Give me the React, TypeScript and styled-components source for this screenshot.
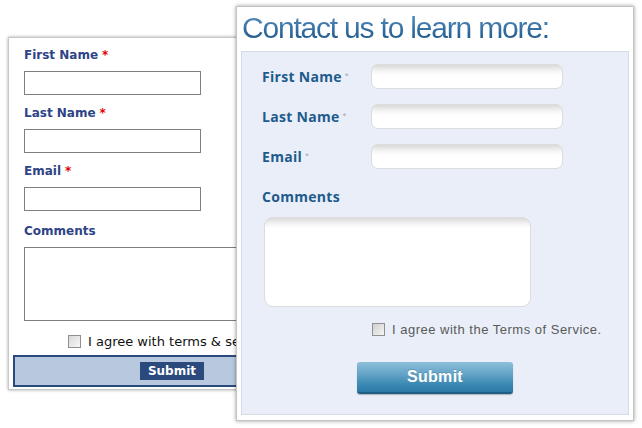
import React from 'react';
import styled, { createGlobalStyle } from 'styled-components';

const GlobalStyle = createGlobalStyle`
  html, body {
    margin: 0;
    padding: 0;
    background: #ffffff;
  }
  body {
    font-family: 'DejaVu Sans', Verdana, sans-serif;
  }
`;

function OldForm() {
  const fields = [
    { label: 'First Name', required: true },
    { label: 'Last Name', required: true },
    { label: 'Email', required: true },
  ];

  return (
    <OldCard>
      {fields.map((f) => (
        <OldField key={f.label}>
          <OldLabel>
            {f.label}
            {f.required && <OldStar>*</OldStar>}
          </OldLabel>
          <OldInput type="text" />
        </OldField>
      ))}
      <OldField $spaced>
        <OldLabel>Comments</OldLabel>
        <OldTextArea />
      </OldField>
      <OldAgree>
        <OldCheck type="checkbox" />
        <span>I agree with terms &amp; services</span>
      </OldAgree>
      <OldSubmitBar>
        <OldSubmit type="button">Submit</OldSubmit>
      </OldSubmitBar>
    </OldCard>
  );
}

function NewForm() {
  const fields = ['First Name', 'Last Name', 'Email'];

  return (
    <NewCard>
      <Title>Contact us to learn more:</Title>
      <Panel>
        {fields.map((label) => (
          <Row key={label}>
            <NewLabel>
              {label}
              <NewStar>*</NewStar>
            </NewLabel>
            <NewInput type="text" />
          </Row>
        ))}
        <CommentsLabel>Comments</CommentsLabel>
        <NewTextArea />
        <NewAgree>
          <NewCheck type="checkbox" />
          <span>I agree with the Terms of Service.</span>
        </NewAgree>
        <SubmitRow>
          <NewSubmit type="button">Submit</NewSubmit>
        </SubmitRow>
      </Panel>
    </NewCard>
  );
}

function App() {
  return (
    <Stage>
      <GlobalStyle />
      <OldForm />
      <NewForm />
    </Stage>
  );
}

export default App;

const Stage = styled.main`
  position: relative;
  width: 642px;
  height: 428px;
  overflow: hidden;
  background: #ffffff;
`;

/* ---------- old, plain form (behind) ---------- */

const OldCard = styled.section`
  position: absolute;
  left: 8px;
  top: 37px;
  width: 330px;
  height: 353px;
  box-sizing: border-box;
  padding: 9px 0 0 15px;
  background: #ffffff;
  border: 1px solid #c9c9c9;
  box-shadow: 0 0 3px rgba(0, 0, 0, 0.35);
  display: flex;
  flex-direction: column;
`;

const OldField = styled.div<{ $spaced?: boolean }>`
  display: flex;
  flex-direction: column;
  gap: 8px;
  margin-top: ${(p) => (p.$spaced ? '2px' : '0')};
  margin-bottom: 10px;
`;

const OldLabel = styled.label`
  font-family: 'DejaVu Sans', Verdana, sans-serif;
  font-weight: bold;
  font-size: 12px;
  line-height: 16px;
  height: 16px;
  color: #2e4486;
`;

const OldStar = styled.span`
  color: #e00000;
  margin-left: 4px;
`;

const OldInput = styled.input`
  box-sizing: border-box;
  width: 177px;
  height: 24px;
  margin: 0;
  border: 1px solid #7f7f7f;
  background: #ffffff;
  outline: none;
`;

const OldTextArea = styled.textarea`
  box-sizing: border-box;
  width: 260px;
  height: 74px;
  margin: 0;
  border: 1px solid #7f7f7f;
  resize: none;
`;

const OldAgree = styled.label`
  display: flex;
  align-items: center;
  gap: 7px;
  margin: 0 0 0 44px;
  height: 20px;
  font-family: 'DejaVu Sans', Verdana, sans-serif;
  font-size: 13px;
  color: #111111;
  white-space: nowrap;
`;

const OldCheck = styled.input`
  appearance: none;
  box-sizing: border-box;
  width: 13px;
  height: 13px;
  margin: 0;
  border: 1px solid #8f8f8f;
  background: linear-gradient(135deg, #d8d8d8, #f8f8f8);
`;

const OldSubmitBar = styled.div`
  display: flex;
  justify-content: center;
  align-items: center;
  box-sizing: border-box;
  width: 318px;
  height: 32px;
  margin: 4px 0 0 -11px;
  background: #b8c9df;
  border: 2px solid #2a4a7e;
`;

const OldSubmit = styled.button`
  width: 64px;
  height: 18px;
  padding: 0;
  border: none;
  background: #2a4a7e;
  color: #ffffff;
  font-family: 'DejaVu Sans', Verdana, sans-serif;
  font-weight: bold;
  font-size: 12px;
`;

/* ---------- new, styled form (in front) ---------- */

const NewCard = styled.section`
  position: absolute;
  left: 236px;
  top: 6px;
  width: 398px;
  height: 415px;
  box-sizing: border-box;
  padding: 0 4px 5px 4px;
  background: #ffffff;
  border: 1px solid #c4c4c4;
  box-shadow: 0 0 4px rgba(0, 0, 0, 0.4);
  display: flex;
  flex-direction: column;
`;

const Title = styled.h1`
  margin: 2px 0 0 1px;
  height: 42px;
  font-family: 'Liberation Sans', Arial, sans-serif;
  font-weight: normal;
  font-size: 30px;
  line-height: 38px;
  letter-spacing: -1.2px;
  background: linear-gradient(180deg, #6398c6 0%, #3872a5 45%, #17507f 85%);
  -webkit-background-clip: text;
  background-clip: text;
  color: transparent;
  align-self: flex-start;
`;

const Panel = styled.div`
  flex: 1;
  box-sizing: border-box;
  padding: 12px 0 0 20px;
  background: #e9eef8;
  border: 1px solid #d5dbe6;
  display: flex;
  flex-direction: column;
`;

const Row = styled.div`
  display: flex;
  align-items: center;
  height: 25px;
  margin-bottom: 15px;
`;

const labelText = `
  font-family: 'Open Sans', 'DejaVu Sans', sans-serif;
  font-weight: bold;
  font-size: 14px;
  letter-spacing: 0.3px;
  color: #1e5b8c;
`;

const NewLabel = styled.label`
  ${labelText}
  width: 109px;
`;

const NewStar = styled.span`
  margin-left: 3px;
  font-size: 7px;
  font-weight: normal;
  color: #9aa4b0;
  vertical-align: 4px;
`;

const fieldSkin = `
  box-sizing: border-box;
  margin: 0;
  border: 1px solid #dcdcdc;
  outline: none;
  background: linear-gradient(180deg, #dadada 0px, #f4f4f4 6px, #ffffff 10px, #ffffff 100%);
`;

const NewInput = styled.input`
  ${fieldSkin}
  width: 192px;
  height: 25px;
  border-radius: 7px;
`;

const CommentsLabel = styled.label`
  ${labelText}
  height: 20px;
  line-height: 20px;
  margin: 3px 0 10px 0;
`;

const NewTextArea = styled.textarea`
  ${fieldSkin}
  width: 267px;
  height: 90px;
  margin-left: 2px;
  border-radius: 9px;
  resize: none;
`;

const NewAgree = styled.label`
  display: flex;
  align-items: center;
  gap: 7px;
  height: 14px;
  margin: 15px 0 0 110px;
  font-family: 'Liberation Sans', Arial, sans-serif;
  font-size: 13px;
  letter-spacing: 0.5px;
  color: #5a5a5a;
  white-space: nowrap;
`;

const NewCheck = styled.input`
  appearance: none;
  box-sizing: border-box;
  width: 13px;
  height: 13px;
  margin: 0;
  border: 1px solid #909090;
  background: linear-gradient(135deg, #cfcfcf, #f5f5f5);
`;

const SubmitRow = styled.div`
  display: flex;
  margin: 26px 0 0 95px;
`;

const NewSubmit = styled.button`
  width: 156px;
  height: 32px;
  padding: 0;
  border: none;
  border-radius: 3px;
  border-bottom: 2px solid #1f5f85;
  background: linear-gradient(180deg, #8dc0da 0%, #5fa0c4 45%, #3a88b3 75%, #2d7aa6 100%);
  color: #ffffff;
  font-family: 'Liberation Sans', Arial, sans-serif;
  font-weight: bold;
  font-size: 16px;
  letter-spacing: 0.3px;
  text-shadow: 0 -1px 0 rgba(0, 0, 0, 0.15);
  box-shadow: 0 1px 1px rgba(0, 0, 0, 0.25);
`;
